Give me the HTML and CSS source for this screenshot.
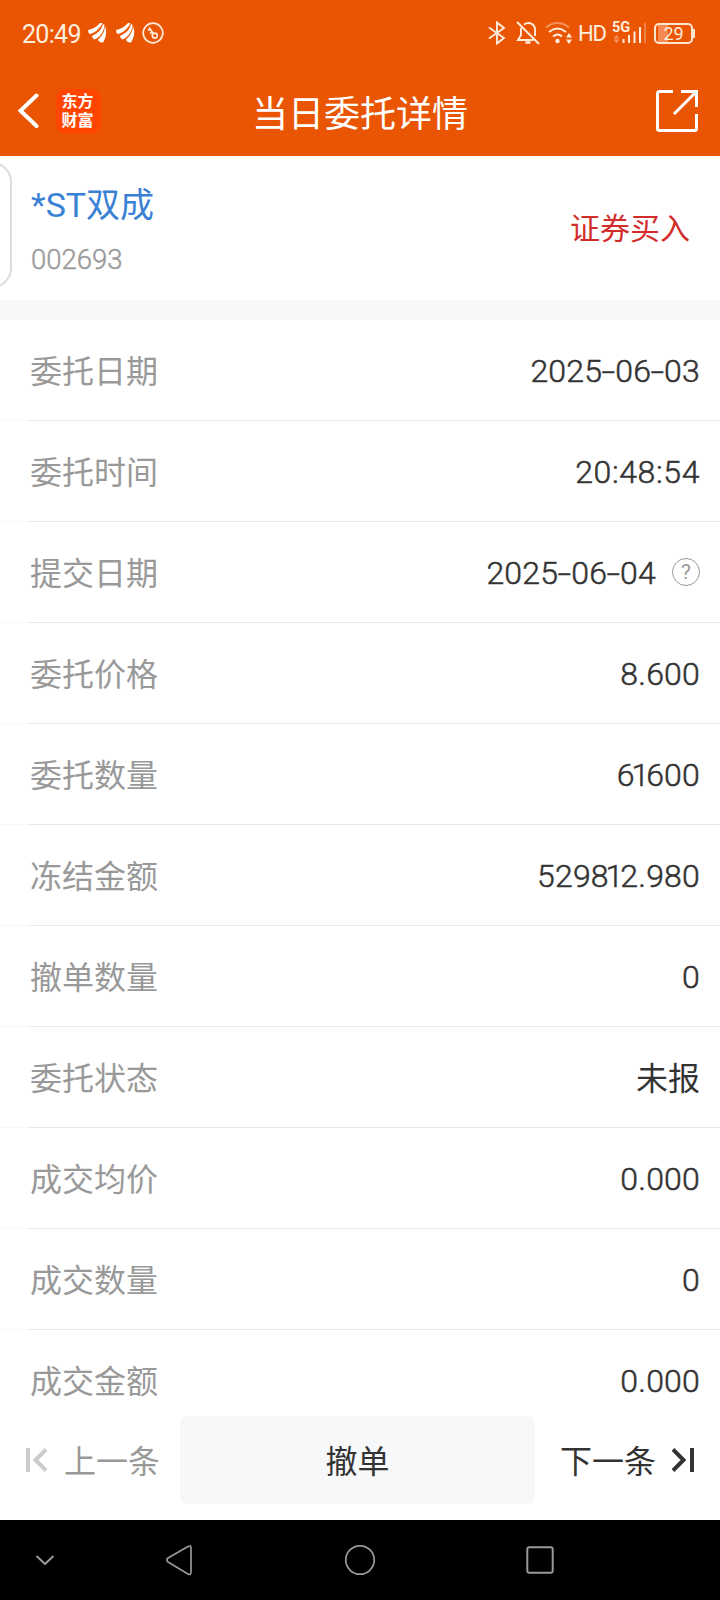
FILE: index.html
```html
<!DOCTYPE html>
<html lang="zh-CN">
<head>
    <meta charset="UTF-8">
    <meta name="viewport" content="width=device-width, initial-scale=1.0">
    <title>当日委托详情</title>
    <link rel="stylesheet" href="styles.css">
</head>
<body>
    <header>
        <!-- 状态栏 -->
        <div class="status">
            <span class="time">20:49</span>
            <svg class="wing" width="19" height="22" viewBox="0 0 19 22" fill="#fff">
                <path d="M0 8C5 7 9 4.500 12 1L14.500 1C12 7 6 11 2 12Q0 11 0 8Z"/>
                <path d="M4 14C10 11 13.500 8 15 2L16.500 3C16 10 12 15 6.500 17.500Q4 16 4 14Z"/>
                <path d="M10 17.500C14 14 16.500 10 17 4C19 9 18.500 15 15 20.500Q11 21 10 17.500Z"/>
            </svg>
            <svg class="wing" width="19" height="22" viewBox="0 0 19 22" fill="#fff">
                <path d="M0 8C5 7 9 4.500 12 1L14.500 1C12 7 6 11 2 12Q0 11 0 8Z"/>
                <path d="M4 14C10 11 13.500 8 15 2L16.500 3C16 10 12 15 6.500 17.500Q4 16 4 14Z"/>
                <path d="M10 17.500C14 14 16.500 10 17 4C19 9 18.500 15 15 20.500Q11 21 10 17.500Z"/>
            </svg>
            <svg class="key" width="22" height="22" viewBox="0 0 22 22" fill="none" stroke="#ffe9d8" stroke-width="1.7">
                <circle cx="11" cy="11" r="9.8"/>
                <circle cx="12.8" cy="13.6" r="2.5"/>
                <path d="M11.5 11.5L7 5.5M6 8.5L8.5 7M8 11.5L10.3 9.8"/>
            </svg>
            <div class="status-right">
                <svg width="18" height="24" viewBox="0 0 18 24" fill="none" stroke="#ffeede" stroke-width="1.9">
                    <path d="M1 6.5L16 17L9 22.5V1.5L16 7L1 17.5"/>
                </svg>
                <svg class="bell" width="24" height="24" viewBox="0 0 24 24" fill="none" stroke="#ffeede" stroke-width="1.9">
                    <path d="M1 1L23 23"/>
                    <path d="M8 3.5C13 0 19 3 19 9V15M5 7V14L2 19H17.5"/>
                    <path d="M9.5 21.5H14.5" stroke-width="2.4"/>
                </svg>
                <svg class="wifi" width="28" height="24" viewBox="0 0 28 24" fill="none" stroke="#ffeede" stroke-width="2">
                    <path d="M1 6.5C8 .5 17 .5 24 6.5" stroke="#f5935c"/>
                    <path d="M4 11C9.500 6.500 15.500 6.500 21 11M8 15.500C11 13 14.500 13 17 15.500"/>
                    <circle cx="12.500" cy="20" r="2.200" fill="#ffeede" stroke="none"/>
                    <path d="M24 12L27 16.500H21ZM24 23L27 18.500H21Z" fill="#ffeede" stroke="none"/>
                </svg>
                <span class="hd">HD</span>
                <div class="signal">
                    <span class="net">5G</span>
                    <svg width="36" height="24" viewBox="0 0 36 24">
                        <path d="M4.500 14L7.500 17.500H1.500ZM4.500 22L7.500 18.500H1.500Z" fill="#f5935c"/>
                        <path d="M11.500 18V22M17 14V22M22.500 10.500V22M28 6V22" stroke="#ffeede" stroke-width="2"/>
                        <path d="M33 2V22" stroke="#f08146" stroke-width="2"/>
                    </svg>
                </div>
                <div class="battery"><span>29</span></div>
            </div>
        </div>
        <!-- 标题栏 -->
        <div class="title-bar">
            <svg class="back" width="22" height="38" viewBox="0 0 22 38" fill="none" stroke="#fff" stroke-width="4" stroke-linecap="round">
                <path d="M19.500 3.500L3.500 18.700L19.500 34"/>
            </svg>
            <div class="logo">东方<br>财富</div>
            <h1>当日委托详情</h1>
            <svg width="42" height="42" viewBox="0 0 42 42" fill="none" stroke="#fff" stroke-width="3">
                <path d="M17 1.500H3.500Q1.500 1.500 1.500 3.500V38.500Q1.500 40.500 3.500 40.500H38.500Q40.500 40.500 40.500 38.500V24"/>
                <path d="M25 1.500H40.500V17M40 2L18 24"/>
            </svg>
        </div>
    </header>

    <section class="stock">
        <div class="tab"></div>
        <div>
            <div class="name">*ST双成</div>
            <div class="code">002693</div>
        </div>
        <div class="side">证券买入</div>
    </section>

    <!-- 委托明细 -->
    <main>
        <div class="row"><span class="label">委托日期</span><span class="value">2025<i>-</i>06<i>-</i>03</span></div>
        <div class="row"><span class="label">委托时间</span><span class="value time-value">20:48:54</span></div>
        <div class="row">
            <span class="label">提交日期</span>
            <span class="value">2025<i>-</i>06<i>-</i>04</span>
            <span class="help">?</span>
        </div>
        <div class="row"><span class="label">委托价格</span><span class="value">8.600</span></div>
        <div class="row"><span class="label">委托数量</span><span class="value"><span class="one">61</span>600</span></div>
        <div class="row"><span class="label">冻结金额</span><span class="value">529<span class="one">81</span>2.980</span></div>
        <div class="row"><span class="label">撤单数量</span><span class="value">0</span></div>
        <div class="row"><span class="label">委托状态</span><span class="value state">未报</span></div>
        <div class="row"><span class="label">成交均价</span><span class="value">0.000</span></div>
        <div class="row"><span class="label">成交数量</span><span class="value">0</span></div>
        <div class="row"><span class="label">成交金额</span><span class="value">0.000</span></div>
    </main>

    <!-- 底部操作 -->
    <div class="actions">
        <div class="prev">
            <svg width="23" height="24" viewBox="0 0 23 24" fill="none" stroke="#ccc" stroke-width="4">
                <path d="M3 0V24M21 1.500L10.500 12L21 22.500"/>
            </svg>
            <span>上一条</span>
        </div>
        <button><span>撤单</span></button>
        <div class="next">
            <span>下一条</span>
            <svg width="23" height="24" viewBox="0 0 23 24" fill="none" stroke="#333" stroke-width="4">
                <path d="M20 0V24M1 1.500L11.500 12L1 22.500"/>
            </svg>
        </div>
    </div>

    <!-- 系统导航栏 -->
    <nav>
        <svg width="720" height="80" viewBox="0 0 720 80" fill="none" stroke="#999" stroke-width="2" stroke-linejoin="round">
            <path d="M36.500 36L45 44L53.500 36"/>
            <path d="M188 26.500Q191 25 191 28V52Q191 55.500 188 54L168 42Q165.500 40 168 38Z" stroke-width="1.700"/>
            <circle cx="360" cy="40" r="14.200" stroke-width="1.700"/>
            <rect x="527.300" y="27.300" width="25.400" height="25.400" rx="2"/>
        </svg>
    </nav>
</body>
</html>
```
FILE: styles.css
```css
* {
    box-sizing: border-box;
}
body {
    font-family: Roboto, "Noto Sans CJK SC", sans-serif;
    margin: 0;
    width: 720px;
    height: 1600px;
    display: flex;
    flex-direction: column;
    overflow: hidden;
    background: #fff;
    color: #333;
}
svg {
    display: block;
    flex: none;
}
header {
    height: 156px;
    flex: none;
    background: #ea5504;
    color: #fff;
}
.status {
    height: 66px;
    padding-left: 22px;
    display: flex;
    align-items: center;
    color: #ffeede;
}
.time {
    width: 66px;
    font-size: 25px;
    letter-spacing: -0.7px;
    padding-top: 2px;
}
.wing {
    margin-right: 9px;
}
.key {
    margin-left: -2px;
}
.status-right {
    margin-left: auto;
    padding-right: 25px;
    display: flex;
    align-items: center;
}
.bell {
    margin-left: 10px;
}
.wifi {
    margin-left: 5px;
}
.hd {
    width: 34px;
    margin-left: 5px;
    font-size: 22px;
    letter-spacing: -1.2px;
}
.signal {
    position: relative;
    width: 36px;
}
.net {
    position: absolute;
    left: 0;
    top: 0;
    font-size: 14.500px;
    line-height: 14px;
    font-weight: bold;
}
.battery {
    position: relative;
    width: 39px;
    height: 21px;
    margin-left: 6px;
    margin-right: 2px;
    border: 2px solid #ffe6d0;
    border-radius: 5px;
    background: linear-gradient(to right, transparent 2px, #f5894f 2px, #f5894f 12px, transparent 12px);
    font-size: 18px;
    line-height: 18px;
    text-align: center;
}
.battery::after {
    content: "";
    position: absolute;
    right: -4px;
    top: 4px;
    width: 2px;
    height: 9px;
    background: #ffe6d0;
}
.title-bar {
    height: 90px;
    padding: 0 22px 0 17px;
    display: flex;
    align-items: center;
}
.logo {
    width: 45px;
    height: 45px;
    margin-left: 17px;
    padding: 3px 2px 0 0;
    border-radius: 10px;
    background: #ff4500;
    font-size: 16px;
    font-weight: bold;
    line-height: 19px;
    text-align: center;
}
h1 {
    flex: 1;
    margin: 0;
    padding: 0 39px 0 2px;
    font-size: 36px;
    font-weight: 400;
    text-align: center;
}
.stock {
    position: relative;
    height: 164px;
    flex: none;
    padding: 0 30px 0 31px;
    display: flex;
    justify-content: space-between;
    border-bottom: 20px solid #f6f7f9;
}
.tab {
    position: absolute;
    left: -40px;
    top: 6px;
    width: 52px;
    height: 126px;
    border: 2px solid #ddd;
    border-radius: 20px;
}
.name {
    margin-top: 27px;
    font-size: 34px;
    line-height: 44px;
    color: #3981d5;
}
.code {
    margin-top: 17px;
    font-size: 27.500px;
    font-weight: 300;
    line-height: 32px;
    color: #999;
    -webkit-text-stroke: 0.4px;
}
.side {
    padding-top: 51px;
    font-size: 30px;
    line-height: 44px;
    color: #d32d2b;
}
main {
    flex: 1;
    min-height: 0;
    overflow: hidden;
}
.row {
    height: 101px;
    padding: 0 20px 0 30px;
    display: flex;
    align-items: center;
    border-bottom: 1px solid;
    border-image: linear-gradient(to right, #f7f7f7 30px, #e9e9e9 30px) 1;
    font-size: 32px;
}
.label {
    flex: 1;
    padding-bottom: 2px;
    color: #999;
}
.value {
    padding-top: 2px;
    font-weight: 300;
    letter-spacing: 0.2px;
    color: #333;
    -webkit-text-stroke: 0.5px;
}
.time-value {
    letter-spacing: 0.6px;
}
.state {
    padding: 0 0 2px;
    font-weight: 400;
    letter-spacing: 0;
    -webkit-text-stroke: 0;
}
/* 日期分隔符加宽 */
.value i {
    display: inline-block;
    width: 13px;
    font-style: normal;
    text-align: center;
    transform: scaleX(1.5);
}
.one {
    letter-spacing: -3px;
}
.help {
    width: 28px;
    height: 28px;
    margin-left: 16px;
    border: 1.500px solid #999;
    border-radius: 50%;
    font-size: 21px;
    line-height: 26px;
    text-align: center;
    color: #999;
}
.actions {
    height: 104px;
    flex: none;
    padding: 0 25px 16px;
    display: flex;
    align-items: center;
    font-size: 32px;
}
.actions span {
    padding-bottom: 2px;
}
.prev, .next {
    display: flex;
    align-items: center;
}
.prev {
    width: 155px;
    gap: 16px;
    color: #999;
}
.next {
    flex: 1;
    justify-content: flex-end;
    gap: 16px;
}
button {
    width: 355px;
    height: 88px;
    padding: 0 0 3px;
    border: none;
    border-radius: 8px;
    background: #f7f8fa;
    color: #333;
    font: inherit;
}
nav {
    height: 80px;
    flex: none;
    background: #000;
}
```
